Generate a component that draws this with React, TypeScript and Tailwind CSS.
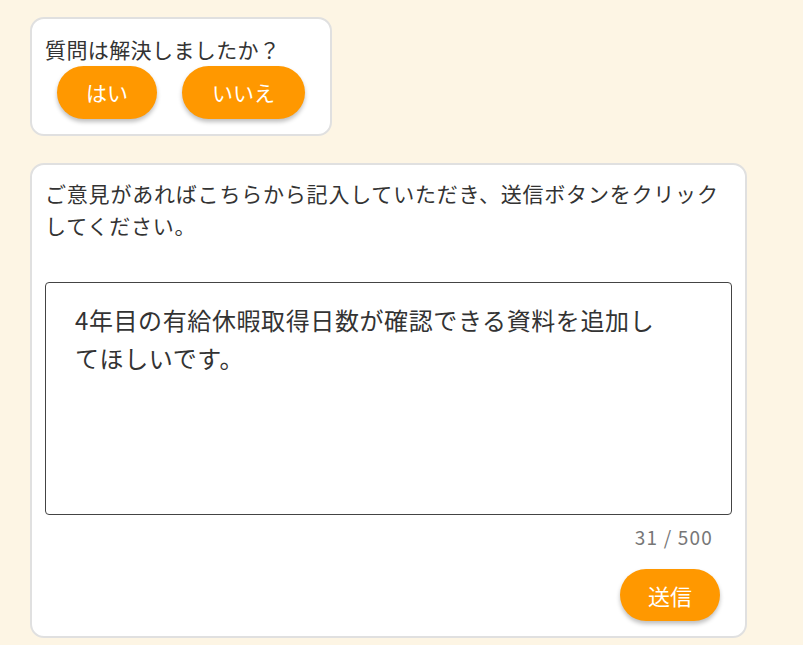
const FeedbackPanel = () => {
  return (
    <div className="min-h-screen bg-[#fdf5e4] pl-[30px] pt-[17px] font-['Noto_Sans_CJK_JP','Noto_Sans',sans-serif] text-[#333]">
      {/* Resolved? */}
      <div className="w-[302px] h-[119px] rounded-[14px] border-2 border-[#e0e0e0] bg-white px-[13px] pt-[15px]">
        <p className="text-[21px] leading-[30px] tracking-[0.4px]">質問は解決しましたか？</p>
        <div className="mt-[2px] ml-[12px] flex gap-[25px]">
          <button className="h-[53px] w-[100px] rounded-full bg-[#ff9800] text-[21px] text-white shadow-[0_3px_4px_rgba(0,0,0,0.25)]">
            はい
          </button>
          <button className="h-[53px] w-[123px] rounded-full bg-[#ff9800] text-[21px] text-white shadow-[0_3px_4px_rgba(0,0,0,0.25)]">
            いいえ
          </button>
        </div>
      </div>

      {/* Feedback form */}
      <div className="mt-[27px] w-[717px] h-[475px] rounded-[14px] border-2 border-[#e0e0e0] bg-white px-[13px] pt-[12px]">
        <p className="text-[21px] leading-[32px] tracking-[0.8px]">
          ご意見があればこちらから記入していただき、送信ボタンをクリックしてください。
        </p>

        <textarea
          className="mt-[41px] block w-full h-[233px] resize-none rounded-[4px] border-[1.5px] border-[#444] pl-[29px] pr-[66px] pt-[18px] text-[24px] leading-[38px] tracking-[0.6px] text-[#333] outline-none"
          defaultValue="4年目の有給休暇取得日数が確認できる資料を追加してほしいです。"
        />

        <p className="mt-[9px] mr-[19px] text-right text-[19px] leading-[26px] tracking-[1.2px] text-[#777]">31 / 500</p>

        <div className="mt-[19px] mr-[12px] flex justify-end">
          <button className="h-[52px] w-[100px] rounded-full bg-[#ff9800] text-[22px] text-white shadow-[0_3px_4px_rgba(0,0,0,0.25)]">
            送信
          </button>
        </div>
      </div>
    </div>
  );
};

export default FeedbackPanel;
